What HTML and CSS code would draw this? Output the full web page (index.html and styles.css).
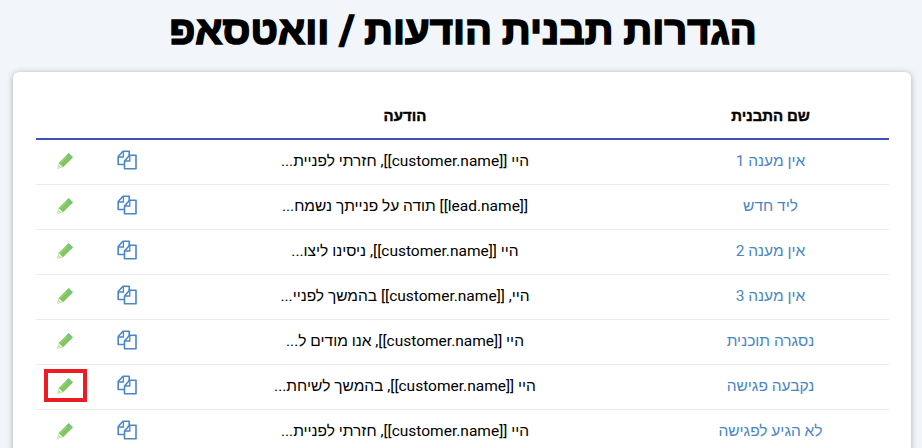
FILE: index.html
```html
<!DOCTYPE html>
<html lang="he" dir="rtl">
<head>
    <meta charset="UTF-8">
    <meta name="viewport" content="width=device-width, initial-scale=1.0">
    <title>הגדרות תבנית הודעות / וואטסאפ</title>
    <link rel="stylesheet" href="styles.css">
</head>
<body>
<svg class="defs" width="0" height="0">
    <symbol id="icon-copy" viewBox="0 0 20 20">
        <path d="M7.5 14.5H1.2V6.5L6 1.2H12.2V6" fill="#fff" stroke="#4a86c8" stroke-width="1.6" stroke-linejoin="round"/>
        <path d="M1.2 7H6.4V1.5" fill="none" stroke="#4a86c8" stroke-width="1.3"/>
        <path d="M7.5 11L12.6 5.2H19V18.8H7.5Z" fill="#fff" stroke="#4a86c8" stroke-width="1.6" stroke-linejoin="round"/>
        <path d="M7.5 11H12.8V5.5" fill="none" stroke="#4a86c8" stroke-width="1.3"/>
    </symbol>
    <symbol id="icon-pencil" viewBox="0 0 18 18">
        <path d="M.3 17.7L1.8 11.6 12.4 1 17 5.6 6.4 16.2z" fill="#82c65e"/>
        <path d="M.3 17.7L1.1 14.3 3.7 16.9z" fill="#dff0c8"/>
        <path d="M1.8 11.6L6.4 16.2 4.2 16.8 1.2 13.8z" fill="#eef7e2"/>
        <path d="M10.6 2.8l4.6 4.6" stroke="#5cc8b4" stroke-width="1.2"/>
        <path d="M4 11.4l6.6-6.6" stroke="#a8dc8c" stroke-width="1"/>
    </symbol>
</svg>

<h1 class="page-title">הגדרות תבנית הודעות / וואטסאפ</h1>

<div class="card">
    <table class="templates">
        <thead>
            <tr>
                <th class="col-name">שם התבנית</th>
                <th class="col-message">הודעה</th>
                <th class="col-icon"></th>
                <th class="col-icon-last"></th>
            </tr>
        </thead>
        <tbody>
            <tr>
                <td class="name">אין מענה 1</td>
                <td>היי [[customer.name]], חזרתי לפניית...</td>
                <td class="action"><svg class="icon-copy"><use href="#icon-copy"/></svg></td>
                <td class="action"><svg class="icon-pencil"><use href="#icon-pencil"/></svg></td>
            </tr>
            <tr>
                <td class="name">ליד חדש</td>
                <td>[[lead.name]] תודה על פנייתך נשמח...</td>
                <td class="action"><svg class="icon-copy"><use href="#icon-copy"/></svg></td>
                <td class="action"><svg class="icon-pencil"><use href="#icon-pencil"/></svg></td>
            </tr>
            <tr>
                <td class="name">אין מענה 2</td>
                <td>היי [[customer.name]], ניסינו ליצו...</td>
                <td class="action"><svg class="icon-copy"><use href="#icon-copy"/></svg></td>
                <td class="action"><svg class="icon-pencil"><use href="#icon-pencil"/></svg></td>
            </tr>
            <tr>
                <td class="name">אין מענה 3</td>
                <td>היי, [[customer.name]] בהמשך לפניי...</td>
                <td class="action"><svg class="icon-copy"><use href="#icon-copy"/></svg></td>
                <td class="action"><svg class="icon-pencil"><use href="#icon-pencil"/></svg></td>
            </tr>
            <tr>
                <td class="name">נסגרה תוכנית</td>
                <td>היי [[customer.name]], אנו מודים ל...</td>
                <td class="action"><svg class="icon-copy"><use href="#icon-copy"/></svg></td>
                <td class="action"><svg class="icon-pencil"><use href="#icon-pencil"/></svg></td>
            </tr>
            <tr>
                <td class="name">נקבעה פגישה</td>
                <td>היי [[customer.name]], בהמשך לשיחת...</td>
                <td class="action"><svg class="icon-copy"><use href="#icon-copy"/></svg></td>
                <td class="action"><span class="highlight"><svg class="icon-pencil"><use href="#icon-pencil"/></svg></span></td>
            </tr>
            <tr>
                <td class="name">לא הגיע לפגישה</td>
                <td>היי [[customer.name]], חזרתי לפניית...</td>
                <td class="action"><svg class="icon-copy"><use href="#icon-copy"/></svg></td>
                <td class="action"><svg class="icon-pencil"><use href="#icon-pencil"/></svg></td>
            </tr>
        </tbody>
    </table>
</div>
</body>
</html>
```

FILE: styles.css
```css
html, body {
    height: 448px;
    overflow: hidden;
}
body {
    font-family: Roboto, "Liberation Sans", Arial, sans-serif;
    background-color: #f2f5f9;
    margin: 0;
    color: #000;
}
.defs {
    display: block;
    height: 0;
}
.page-title {
    font-size: 40px;
    font-weight: bold;
    text-align: center;
    margin: 0;
    padding: 8px 0 0 4px;
    height: 72px;
    line-height: 46px;
    box-sizing: border-box;
    -webkit-text-stroke: 1.6px #000;
}
.card {
    background-color: #fff;
    margin: 0 11px 0 13px;
    padding: 17px 22px 0 23px;
    border-radius: 6px;
    box-shadow: 0 1px 6px rgba(0, 0, 0, 0.3);
}
.templates {
    width: 853px;
    table-layout: fixed;
    border-collapse: collapse;
    font-size: 15.5px;
}
.templates th {
    font-size: 15px;
    height: 50px;
    padding: 4px 0 0;
    box-sizing: border-box;
    text-align: center;
    border-bottom: 2px solid #3f51b5;
    -webkit-text-stroke: 0.4px #000;
}
.templates td {
    height: 42px;
    padding: 0 0 2px;
    text-align: center;
    border-bottom: 1px solid #e9ecef;
}
.templates td.action {
    padding-bottom: 4px;
    height: 40px;
}
.col-name {
    width: 237px;
}
.col-message {
    width: 494px;
}
.col-icon {
    width: 63px;
}
.col-icon-last {
    width: 59px;
}
.name {
    color: #4a86c5;
}
.icon-copy {
    display: inline-block;
    vertical-align: middle;
    width: 20px;
    height: 20px;
}
.icon-pencil {
    display: inline-block;
    vertical-align: middle;
    width: 17px;
    height: 17px;
}
.highlight {
    display: inline-flex;
    align-items: center;
    justify-content: center;
    width: 43px;
    height: 33px;
    box-sizing: border-box;
    vertical-align: middle;
    border: 4px solid #ed1c24;
}
```
